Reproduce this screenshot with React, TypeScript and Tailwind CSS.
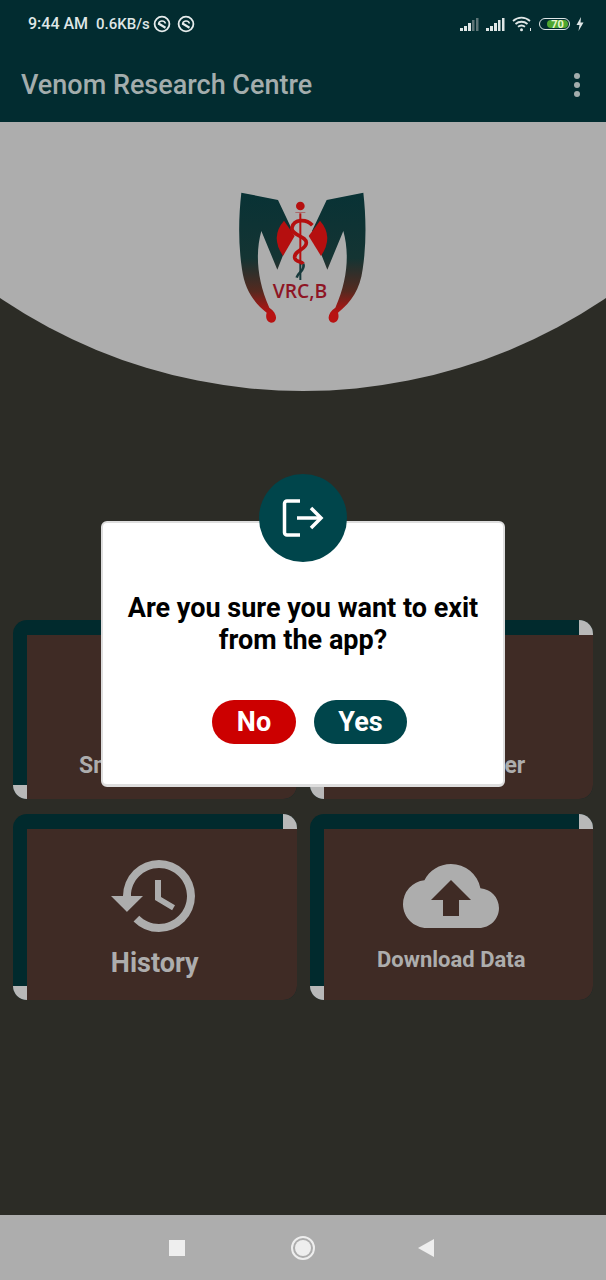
import React from 'react';
import { MdHistory, MdCloudUpload, MdPets, MdCall } from 'react-icons/md';

const font = { fontFamily: 'Roboto, sans-serif' };

const SignalBars = ({ faded }: { faded?: boolean }) => {
  const dim = faded ? '#5d7476' : '#dfe6e6';
  return (
    <svg width="19" height="16" viewBox="0 0 19 16">
      <rect x="0" y="12" width="3" height="3" fill="#dfe6e6" />
      <rect x="4" y="10" width="3" height="5" fill="#dfe6e6" />
      <rect x="8" y="7" width="3" height="8" fill="#dfe6e6" />
      <rect x="12" y="4" width="2.500" height="11" fill={dim} />
      <rect x="16" y="2" width="2.500" height="13" fill={dim} />
    </svg>
  );
};

const SyncIcon = () => (
  <svg width="18" height="18" viewBox="0 0 18 18" fill="none" stroke="#e6ecec">
    <circle cx="9" cy="9" r="7.400" strokeWidth="1.800" />
    <path d="M5.500 9.500 A3.600 3.600 0 0 1 12.500 8.500" strokeWidth="1.500" />
    <path d="M5.500 8.500 L12.500 12.800" strokeWidth="2.200" />
  </svg>
);

const StatusBar = () => (
  <div className="flex h-[48px] items-center pl-[28px] pr-[22px] text-[#dfe6e6]">
    <span className="text-[16px] font-medium">9:44 AM</span>
    <span className="ml-[8px] text-[15px] font-medium">0.6KB/s</span>
    <span className="ml-[3px]"><SyncIcon /></span>
    <span className="ml-[6px]"><SyncIcon /></span>
    <div className="ml-auto flex items-center">
      <SignalBars faded />
      <span className="ml-[7px]"><SignalBars /></span>
      <svg className="ml-[7px]" width="21" height="16" viewBox="0 0 21 16" fill="none" stroke="#dfe6e6" strokeWidth="1.800">
        <path d="M1 5 C6 0.500 13 0.500 18 5" />
        <path d="M3.500 8 C7 5 12 5 15.500 8" />
        <path d="M6 10.800 C8 9.300 11 9.300 13 10.800" />
        <circle cx="9.500" cy="13.800" r="1.500" fill="#dfe6e6" stroke="none" />
        <rect x="18" y="12" width="1" height="3" fill="#dfe6e6" stroke="none" />
      </svg>
      <div className="ml-[6px] flex h-[12px] w-[31px] items-center justify-end rounded-full border border-[#dfe6e6] p-[1px]">
        <div className="flex h-full w-[21px] items-center justify-center rounded-full bg-[#4ea62f] text-[11px] leading-none font-bold text-[#e8f5c8]">
          70
        </div>
      </div>
      <svg className="ml-[6px]" width="8" height="14" viewBox="0 0 8 14" fill="#dfe6e6">
        <path d="M5 0 L0.500 8 H3.500 L2.500 14 L7.500 5.500 H4.500 Z" />
      </svg>
    </div>
  </div>
);

// wing outline is traced once and mirrored for the right side
const wingPath =
  'M70 50 L180 72 L224 165 L178 281 L130 165 C112 230 116 310 154 395 C174 408 180 428 168 438 C152 446 140 430 146 410 C106 378 80 340 72 280 C60 200 62 120 70 50 Z';

const Logo = () => (
  <svg width="170" height="160" viewBox="0 0 510 480">
    <defs>
      <linearGradient id="wing" x1="0" y1="48" x2="0" y2="430" gradientUnits="userSpaceOnUse">
        <stop offset="0" stopColor="#083235" />
        <stop offset="0.52" stopColor="#143433" />
        <stop offset="0.78" stopColor="#55291f" />
        <stop offset="0.95" stopColor="#b81212" />
      </linearGradient>
    </defs>
    <path d={wingPath} fill="url(#wing)" />
    <path d={wingPath} fill="url(#wing)" transform="translate(506 0) scale(-1 1)" />
    <path d="M198 134 Q156 182 195 240 L230 180 Z" fill="#b50f0f" />
    <path d="M306 134 Q348 182 309 240 L272 180 Z" fill="#b50f0f" />
    <circle cx="247" cy="90" r="13" fill="#b50f0f" />
    <rect x="232" y="108" width="30" height="3" fill="#a8686a" />
    <rect x="244" y="112" width="6" height="140" fill="#b50f0f" />
    <rect x="244" y="252" width="6" height="60" fill="#173a3c" />
    <path
      d="M283 148 C265 128 228 128 222 155 C218 180 265 178 265 200 C265 222 228 222 230 245 C232 258 250 256 256 264"
      fill="none"
      stroke="#b50f0f"
      strokeWidth="11"
    />
    <path d="M256 264 C262 284 240 288 236 305" fill="none" stroke="#173a3c" strokeWidth="8" />
    <text x="246" y="367" textAnchor="middle" fontFamily="'Open Sans', sans-serif" fontSize="58" fontWeight="600" fill="#8e1524">
      VRC,B
    </text>
  </svg>
);

const Hero = () => (
  <div className="flex h-[269px] flex-col items-center overflow-hidden">
    <div className="mt-[-811px] ml-[-237px] flex h-[1080px] w-[1080px] shrink-0 items-end justify-center self-start rounded-full bg-[#adadad] pb-[55px]">
      <Logo />
    </div>
  </div>
);

interface CardProps {
  label: string;
  labelClass: string;
  icon: React.ReactNode;
  height: string;
}

const Card = ({ label, labelClass, icon, height }: CardProps) => (
  <div className={`flex overflow-hidden rounded-[14px] bg-[#012a2d] ${height}`}>
    <div className="flex w-[14px] shrink-0 flex-col">
      <div className="flex-1" />
      <div className="h-[14px] bg-[#b8b8b8]" />
    </div>
    <div className="flex min-w-0 flex-1 flex-col">
      <div className="flex h-[15px] shrink-0 justify-end">
        <div className="w-[14px] bg-[#b8b8b8]" />
      </div>
      <div className="flex flex-1 flex-col items-center bg-[#3f2b25] pt-[19px] pr-[14px]">
        {icon}
        <span className={`-mt-[1px] font-bold text-[#adadad] ${labelClass}`}>{label}</span>
      </div>
    </div>
  </div>
);

const ExitDialog = () => (
  <div className="absolute top-[521px] left-[101px] flex h-[266px] w-[404px] flex-col items-center rounded-[6px] border-2 border-b-[3px] border-[#dedede] bg-white">
    <div className="absolute top-[-49px] left-[156px] flex h-[88px] w-[88px] items-center justify-center rounded-full bg-[#00454b]">
      <svg width="88" height="88" viewBox="0 0 88 88" fill="none" stroke="#ffffff" strokeWidth="3.500">
        <path d="M41 27 H28 a2.500 2.500 0 0 0 -2.500 2.500 V58.500 a2.500 2.500 0 0 0 2.500 2.500 H41" />
        <path d="M38 44 H61" />
        <path d="M52 34 L62 44 L52 54" />
      </svg>
    </div>
    <p className="mt-[69px] text-center text-[27px] leading-[32px] font-bold text-black">
      Are you sure you want to exit
      <br />
      from the app?
    </p>
    <div className="mt-[44px] ml-[13px] flex gap-[18px]">
      <button className="h-[44px] w-[84px] rounded-full bg-[#cc0000] text-[27px] font-bold text-white">No</button>
      <button className="h-[44px] w-[93px] rounded-full bg-[#00454b] text-[27px] font-bold text-white">Yes</button>
    </div>
  </div>
);

const App = () => (
  <div className="relative flex h-[1280px] w-[606px] flex-col overflow-hidden bg-[#2c2c26]" style={font}>
    <header className="flex h-[122px] shrink-0 flex-col bg-[#022c30]">
      <StatusBar />
      <div className="flex flex-1 items-center justify-between pr-[26px] pl-[21px]">
        <h1 className="text-[27px] font-medium text-[#a3adad]">Venom Research Centre</h1>
        <div className="flex flex-col gap-[3px]">
          <span className="h-[6px] w-[6px] rounded-full bg-[#a3adad]" />
          <span className="h-[6px] w-[6px] rounded-full bg-[#a3adad]" />
          <span className="h-[6px] w-[6px] rounded-full bg-[#a3adad]" />
        </div>
      </div>
    </header>

    <Hero />

    <div className="mt-[229px] grid grid-cols-2 gap-x-[13px] gap-y-[15px] pr-[13px] pl-[13px]">
      <Card height="h-[179px]" label="Snake Species" labelClass="text-[23px]" icon={<MdPets size={96} color="#adadad" />} />
      <Card height="h-[179px]" label="Nearby Helper" labelClass="text-[23px]" icon={<MdCall size={96} color="#adadad" />} />
      <Card height="h-[186px]" label="History" labelClass="text-[27px]" icon={<MdHistory size={96} color="#adadad" />} />
      <Card height="h-[186px]" label="Download Data" labelClass="text-[22px]" icon={<MdCloudUpload size={96} color="#adadad" />} />
    </div>

    <nav className="mt-auto flex h-[65px] items-center bg-[#adadad]">
      <div className="ml-[169px] h-[16px] w-[16px] bg-[#eeeeee]" />
      <div className="ml-[106px] flex h-[24px] w-[24px] items-center justify-center rounded-full border-2 border-[#eeeeee]">
        <div className="h-[16px] w-[16px] rounded-full bg-[#eeeeee]" />
      </div>
      <svg className="ml-[103px]" width="16" height="18" viewBox="0 0 16 18">
        <path d="M16 0 V18 L0 9 Z" fill="#eeeeee" />
      </svg>
    </nav>

    <ExitDialog />
  </div>
);

export default App;
